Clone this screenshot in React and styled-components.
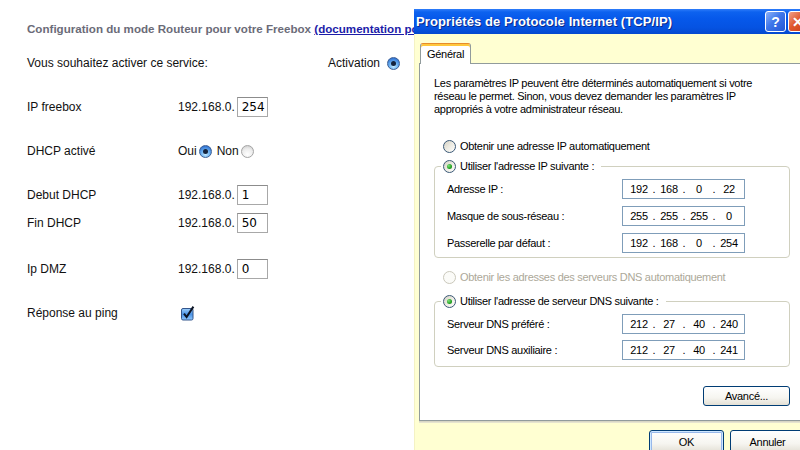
import React from 'react';
import styled, { createGlobalStyle } from 'styled-components';

const GlobalStyle = createGlobalStyle`
  html, body {
    margin: 0;
    padding: 0;
    background: #fff;
  }
  body {
    width: 800px;
    height: 450px;
    overflow: hidden;
  }
`;

const Screen = styled.div`
  display: flex;
  width: 800px;
  height: 450px;
  overflow: hidden;
  background: #fff;
`;

/* ---------- Freebox page ---------- */

const RouterPanel = styled.section`
  width: 414px;
  flex-shrink: 0;
  box-sizing: border-box;
  padding: 21px 0 0 27px;
  overflow: hidden;
  font-family: "Liberation Sans", Arial, sans-serif;
  font-size: 12px;
  color: #111;
`;

const Heading = styled.h1`
  margin: 0;
  height: 16px;
  font-size: 11.6px;
  line-height: 16px;
  font-weight: bold;
  color: #6b6b78;
  white-space: nowrap;

  a {
    color: #1c1ca8;
    text-decoration: underline;
  }
`;

const Row = styled.div`
  display: flex;
  align-items: center;
  height: 22px;
  margin-top: ${p => p.$gap}px;
  white-space: nowrap;
`;

const ServiceRow = styled(Row)`
  width: 373px;
  justify-content: space-between;
`;

const Label = styled.span`
  width: 151px;
  flex-shrink: 0;
`;

const Inline = styled.span`
  display: inline-flex;
  align-items: center;
  gap: ${p => p.$gap || 0}px;
`;

const Octet = styled.span`
  display: inline-block;
  width: 31px;
  height: 20px;
  box-sizing: border-box;
  margin-left: 2px;
  padding-left: 4px;
  border: 1px solid #a8a8a8;
  border-top-color: #8c8c8c;
  font-family: "DejaVu Sans", sans-serif;
  font-size: 12px;
  line-height: 18px;
  color: #000;
`;

const AquaRadio = styled.span`
  position: relative;
  display: inline-block;
  width: 13px;
  height: 13px;
  box-sizing: border-box;
  border-radius: 50%;
  margin-left: ${p => p.$ml || 0}px;
  border: 1px solid ${p => (p.$on ? '#3d5f94' : '#a4a4a4')};
  background: ${p =>
    p.$on
      ? 'radial-gradient(circle at 50% 75%, #c8ecff 0%, #6fb4f2 40%, #2a6ccf 85%)'
      : 'radial-gradient(circle at 50% 75%, #ffffff 0%, #ececec 55%, #c4c4c4 100%)'};

  &::after {
    content: '';
    display: ${p => (p.$on ? 'block' : 'none')};
    position: absolute;
    left: 3px;
    top: 3px;
    width: 5px;
    height: 5px;
    border-radius: 50%;
    background: #14233d;
  }
`;

const AquaCheck = () => (
  <svg width="16" height="16" viewBox="0 0 16 16" style={{ marginLeft: 2 }}>
    <defs>
      <linearGradient id="cb" x1="0" y1="0" x2="0" y2="1">
        <stop offset="0" stopColor="#9fd0fb" />
        <stop offset="0.5" stopColor="#4b93e6" />
        <stop offset="1" stopColor="#8fc8ff" />
      </linearGradient>
    </defs>
    <rect x="1.5" y="3.5" width="11.5" height="11.5" rx="1.5" fill="url(#cb)" stroke="#34568c" />
    <path d="M4 8.6 L6.6 12 L13.4 1.6" fill="none" stroke="#0c1424" strokeWidth="2" />
  </svg>
);

/* ---------- Windows XP dialog ---------- */

const Dialog = styled.div`
  flex-shrink: 0;
  width: 400px;
  height: 441px;
  margin-top: 9px;
  display: flex;
  flex-direction: column;
  background: #ffffd2;
  font-family: "Liberation Sans", Tahoma, sans-serif;
  font-size: 11px;
  letter-spacing: -0.3px;
  color: #000;
`;

const TitleBar = styled.div`
  height: 25px;
  flex-shrink: 0;
  display: flex;
  align-items: center;
  padding: 0 5px 0 2px;
  background: linear-gradient(
    to bottom,
    #2f7dfa 0%,
    #0d62ef 12%,
    #0658ea 40%,
    #0553e2 75%,
    #0448cf 100%
  );
  color: #fff;
  font-size: 13px;
  font-weight: bold;
  letter-spacing: 0.1px;
  text-shadow: 1px 1px 0 #0a2a8a;
`;

const TitleText = styled.span`
  flex: 1;
  white-space: nowrap;
`;

const CaptionButton = styled.span`
  width: 21px;
  height: 21px;
  box-sizing: border-box;
  margin-left: 2px;
  flex-shrink: 0;
  display: flex;
  align-items: center;
  justify-content: center;
  border: 1px solid #fff;
  border-radius: 3px;
  font-size: 14px;
  font-weight: bold;
  text-shadow: none;
  background: ${p =>
    p.$close
      ? 'linear-gradient(135deg, #f0a08a 0%, #e0582f 45%, #c93d17 100%)'
      : 'linear-gradient(135deg, #8db2f8 0%, #3f77ea 45%, #2356d6 100%)'};
`;

const DialogBody = styled.div`
  flex: 1;
  display: flex;
  flex-direction: column;
  padding: 9px 4px 0 4px;
  border-left: 1px solid #f4f2c4;
`;

const TabStrip = styled.div`
  display: flex;
  padding-left: 1px;
  margin-bottom: -1px;
  position: relative;
  z-index: 1;
`;

const Tab = styled.div`
  height: 21px;
  box-sizing: border-box;
  padding: 3px 6px 0 6px;
  background: #fff;
  border: 1px solid #919b9c;
  border-top: 1px solid #e68b2c;
  border-bottom: none;
  border-radius: 3px 3px 0 0;
  box-shadow: inset 0 2px 0 #ffc73c;
  line-height: 14px;
`;

const TabPage = styled.div`
  height: 358px;
  box-sizing: border-box;
  padding: 13px 0 0 14px;
  background: #fff;
  border: 1px solid #919b9c;
  box-shadow: 0 1px 0 #d8d6c4, 0 2px 0 #e6e4cf;
`;

const Intro = styled.p`
  margin: 0;
  line-height: 13px;
  white-space: nowrap;
`;

const Option = styled.div`
  display: flex;
  align-items: center;
  gap: 4px;
  height: 16px;
  padding-left: 9px;
  margin-top: ${p => p.$gap}px;
  color: ${p => (p.$disabled ? '#aca899' : '#000')};
  white-space: nowrap;
`;

const XpRadio = styled.span`
  position: relative;
  width: 13px;
  height: 13px;
  box-sizing: border-box;
  flex-shrink: 0;
  border-radius: 50%;
  border: 1px solid ${p => (p.$disabled ? '#cac8bb' : '#3a5876')};
  background: ${p =>
    p.$disabled
      ? '#fbfbf8'
      : 'linear-gradient(135deg, #d4d1c4 0%, #ebe9e0 45%, #ffffff 100%)'};

  &::after {
    content: '';
    display: ${p => (p.$on ? 'block' : 'none')};
    position: absolute;
    left: 3px;
    top: 3px;
    width: 5px;
    height: 5px;
    border-radius: 50%;
    background: radial-gradient(circle at 35% 35%, #7fe27a 0%, #21a121 60%, #16801a 100%);
  }
`;

const GroupBox = styled.fieldset`
  width: 356px;
  box-sizing: border-box;
  margin: ${p => p.$gap}px 0 0 0;
  padding: 0 0 ${p => p.$bottom}px 6px;
  border: 1px solid #d0d0bf;
  border-radius: 4px;
  min-inline-size: 0;
`;

const Legend = styled.legend`
  display: flex;
  align-items: center;
  gap: 4px;
  height: 16px;
  padding: 0 7px 0 2px;
  white-space: nowrap;
`;

const FieldRow = styled.div`
  display: flex;
  align-items: center;
  height: 20px;
  padding-left: 6px;
  margin-top: ${p => p.$gap}px;
`;

const FieldLabel = styled.span`
  width: 175px;
  flex-shrink: 0;
`;

const IpBox = styled.div`
  width: 123px;
  height: 20px;
  box-sizing: border-box;
  display: flex;
  align-items: center;
  padding-left: 4px;
  border: 1px solid #7f9db9;
  background: #fff;
`;

const IpPart = styled.span`
  width: 24px;
  text-align: center;
`;

const IpDot = styled.span`
  width: 6px;
  text-align: center;
`;

const ButtonRow = styled.div`
  width: 356px;
  display: flex;
  justify-content: flex-end;
  margin-top: ${p => p.$gap}px;
`;

const XpButton = styled.div`
  width: ${p => p.$w}px;
  height: ${p => p.$h}px;
  box-sizing: border-box;
  display: flex;
  align-items: center;
  justify-content: center;
  border: 1px solid #003c74;
  border-radius: 3px;
  background: linear-gradient(to bottom, #ffffff 0%, #f6f5f0 60%, #e3e0d5 100%);
  box-shadow: ${p =>
    p.$default ? 'inset 0 0 0 1px #cee7ff, inset 0 0 0 2px #98b8ea' : 'none'};
`;

const Footer = styled.div`
  display: flex;
  justify-content: flex-end;
  gap: 6px;
  padding: 9px 5px 0 0;
`;

const IpAddress = ({ value }) => {
  const parts = value.split('.');
  return (
    <IpBox>
      {parts.map((p, i) => (
        <React.Fragment key={i}>
          <IpPart>{p}</IpPart>
          {i < 3 && <IpDot>.</IpDot>}
        </React.Fragment>
      ))}
    </IpBox>
  );
};

const ipRows = [
  { label: 'Adresse IP :', value: '192.168.0.22' },
  { label: 'Masque de sous-réseau :', value: '255.255.255.0' },
  { label: 'Passerelle par défaut :', value: '192.168.0.254' },
];

const dnsRows = [
  { label: 'Serveur DNS préféré :', value: '212.27.40.240' },
  { label: 'Serveur DNS auxiliaire :', value: '212.27.40.241' },
];

const App = () => (
  <Screen>
    <GlobalStyle />
    <RouterPanel>
      <Heading>
        Configuration du mode Routeur pour votre Freebox{' '}
        <a href="#doc">(documentation pour le mode routeur)</a>
      </Heading>
      <ServiceRow $gap={15}>
        <span>Vous souhaitez activer ce service:</span>
        <Inline $gap={7}>
          Activation <AquaRadio $on />
        </Inline>
      </ServiceRow>
      <Row $gap={22}>
        <Label>IP freebox</Label>
        <Inline>192.168.0.<Octet>254</Octet></Inline>
      </Row>
      <Row $gap={22}>
        <Label>DHCP activé</Label>
        <Inline>
          Oui<AquaRadio $on $ml={2} />
          <span style={{ marginLeft: 5 }}>Non</span>
          <AquaRadio $ml={2} />
        </Inline>
      </Row>
      <Row $gap={22}>
        <Label>Debut DHCP</Label>
        <Inline>192.168.0.<Octet>1</Octet></Inline>
      </Row>
      <Row $gap={6}>
        <Label>Fin DHCP</Label>
        <Inline>192.168.0.<Octet>50</Octet></Inline>
      </Row>
      <Row $gap={24}>
        <Label>Ip DMZ</Label>
        <Inline>192.168.0.<Octet>0</Octet></Inline>
      </Row>
      <Row $gap={22}>
        <Label>Réponse au ping</Label>
        <AquaCheck />
      </Row>
    </RouterPanel>

    <Dialog>
      <TitleBar>
        <TitleText>Propriétés de Protocole Internet (TCP/IP)</TitleText>
        <CaptionButton>?</CaptionButton>
        <CaptionButton $close>✕</CaptionButton>
      </TitleBar>
      <DialogBody>
        <TabStrip>
          <Tab>Général</Tab>
        </TabStrip>
        <TabPage>
          <Intro>
            Les paramètres IP peuvent être déterminés automatiquement si votre
            <br />
            réseau le permet. Sinon, vous devez demander les paramètres IP
            <br />
            appropriés à votre administrateur réseau.
          </Intro>
          <Option $gap={22}>
            <XpRadio />
            Obtenir une adresse IP automatiquement
          </Option>
          <GroupBox $gap={4} $bottom={4}>
            <Legend>
              <XpRadio $on />
              Utiliser l'adresse IP suivante :
            </Legend>
            {ipRows.map((r, i) => (
              <FieldRow key={r.label} $gap={i === 0 ? 5 : 7}>
                <FieldLabel>{r.label}</FieldLabel>
                <IpAddress value={r.value} />
              </FieldRow>
            ))}
          </GroupBox>
          <Option $gap={11} $disabled>
            <XpRadio $disabled />
            Obtenir les adresses des serveurs DNS automatiquement
          </Option>
          <GroupBox $gap={8} $bottom={6}>
            <Legend>
              <XpRadio $on />
              Utiliser l'adresse de serveur DNS suivante :
            </Legend>
            {dnsRows.map((r, i) => (
              <FieldRow key={r.label} $gap={i === 0 ? 5 : 6}>
                <FieldLabel>{r.label}</FieldLabel>
                <IpAddress value={r.value} />
              </FieldRow>
            ))}
          </GroupBox>
          <ButtonRow $gap={19}>
            <XpButton $w={87} $h={20}>Avancé...</XpButton>
          </ButtonRow>
        </TabPage>
        <Footer>
          <XpButton $w={75} $h={23} $default>OK</XpButton>
          <XpButton $w={75} $h={23}>Annuler</XpButton>
        </Footer>
      </DialogBody>
    </Dialog>
  </Screen>
);

export default App;
